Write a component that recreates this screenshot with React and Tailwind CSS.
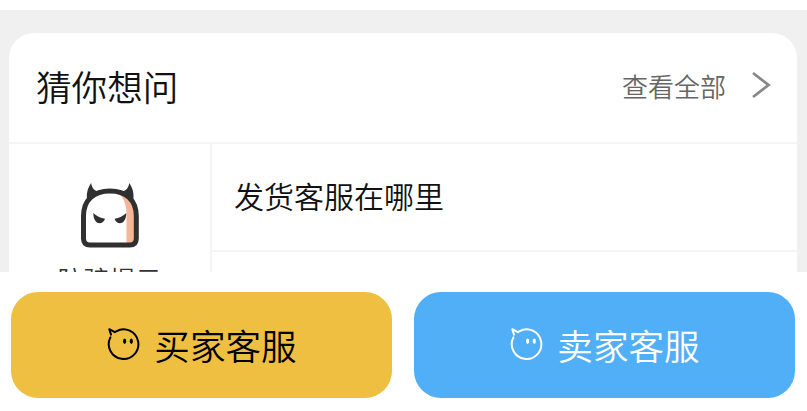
import { clsx } from 'clsx';

const SERVICES = [
  { label: '买家客服', tone: 'bg-[#efbf42] text-black' },
  { label: '卖家客服', tone: 'bg-[#50aff6] text-white' },
];

const DevilIcon = () => (
  <svg className="w-[60px] h-[68px] block" viewBox="0 0 60 68" fill="none">
    <path d="M36 8C50 11 56 20 56 33V61Q56 64 52 64H46.500V32C46.500 22 43 14 36 8Z" fill="#f6b596" />
    <path
      d="M3.500 34C3.500 18 14 9 29.900 9S56.300 18 56.300 34V56.500Q56.300 63 49.800 63H10Q3.500 63 3.500 56.500Z"
      stroke="#303030"
      strokeWidth="5"
    />
    <path d="M11.200 1C7 7 6 13 7.500 20L19 9.500C14.500 9 11.700 6 11.200 1Z" fill="#303030" />
    <path d="M49.200 1C53.400 7 54.400 13 52.900 20L41.400 9.500C45.900 9 48.700 6 49.200 1Z" fill="#303030" />
    <path d="M13.300 31Q18 35.500 25 36.700C23 43.500 13.500 43.500 13.300 31Z" fill="#303030" />
    <path d="M46.300 31Q41.600 35.500 34.600 36.700C36.600 43.500 46.100 43.500 46.300 31Z" fill="#303030" />
  </svg>
);

const ChatFaceIcon = () => (
  <svg className="w-[33px] h-8 shrink-0" viewBox="0 0 33 32" fill="none" stroke="currentColor" strokeWidth="2">
    <path
      d="M3.400 9.400A14.800 14.800 0 1 0 9.200 3.300L7.800 4.200L2.300 1.200L4 6.600"
      strokeLinecap="round"
      strokeLinejoin="round"
    />
    <ellipse cx="17.600" cy="13.300" rx="1.600" ry="2.700" fill="currentColor" stroke="none" />
    <ellipse cx="24.300" cy="13.300" rx="1.600" ry="2.700" fill="currentColor" stroke="none" />
  </svg>
);

const App = () => {
  return (
    <div className="w-[807px] h-[411px] bg-white overflow-hidden font-['Noto_Sans_CJK_SC',sans-serif]">
      <div className="h-[272px] overflow-hidden bg-[#f0f0f0]">
        <div className="h-2.5 bg-white" />

        <section className="mt-[23px] ml-[9px] w-[788px] h-[300px] rounded-t-[25px] bg-white overflow-hidden">
          {/* Header */}
          <div className="h-[111px] pb-[3px] pl-[27px] pr-[26px] flex items-center justify-between border-b-2 border-[#f5f5f5]">
            <h2 className="text-[35.6px] leading-none font-[350] text-[#111]">猜你想问</h2>
            <div className="flex items-center text-[#666]">
              <span className="text-[26px] leading-none font-[350]">查看全部</span>
              <svg className="ml-[25px] w-5 h-7 mb-0.5" viewBox="0 0 20 28" fill="none" stroke="#888" strokeWidth="2.800">
                <path d="M2 2L17.500 14L2 26" />
              </svg>
            </div>
          </div>

          <div className="flex">
            {/* Kategori */}
            <div className="w-[203px] h-[160px] pt-[38px] flex flex-col items-center border-r-2 border-[#f5f5f5]">
              <DevilIcon />
              <span className="mt-4 text-[26px] leading-none font-[350] text-[#333]">防骗提示</span>
            </div>

            <div className="flex-1">
              <div className="h-[108px] pb-1 pl-[22px] flex items-center border-b-2 border-[#f5f5f5]">
                <span className="text-[30px] leading-none font-[350] text-[#111]">发货客服在哪里</span>
              </div>
            </div>
          </div>
        </section>
      </div>

      {/* Tombol layanan */}
      <div className="h-[139px] px-[11px] pt-5 flex gap-[22px]">
        {SERVICES.map(s => (
          <button
            key={s.label}
            type="button"
            className={clsx('w-[381px] h-[106px] pb-[3px] pl-px rounded-[27px] flex items-center justify-center gap-3.5', s.tone)}
          >
            <ChatFaceIcon />
            <span className="pt-0.5 text-[35.6px] leading-none font-[350]">{s.label}</span>
          </button>
        ))}
      </div>
    </div>
  );
};

export default App;
